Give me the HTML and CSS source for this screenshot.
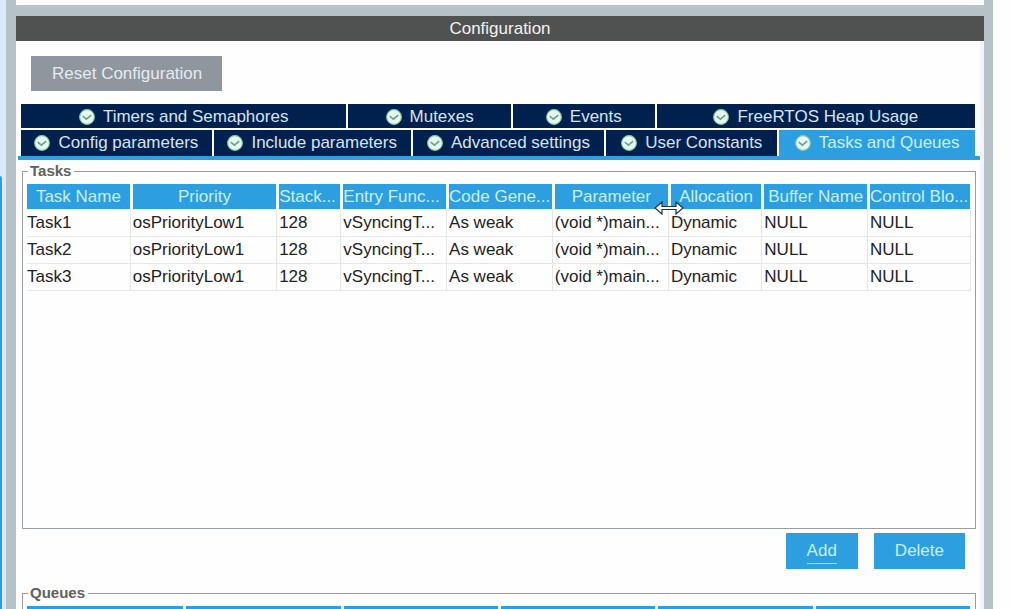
FILE: index.html
```
<!DOCTYPE html>
<html lang="en">
<head>
  <meta charset="UTF-8" />
  <meta name="viewport" content="width=device-width, initial-scale=1.0" />
  <title>Configuration</title>
  <link rel="stylesheet" href="styles.css">
</head>
<body>
  <svg class="defs" width="0" height="0" aria-hidden="true">
    <symbol id="check" viewBox="0 0 16 16">
      <circle cx="8" cy="8" r="7.4" fill="#e4faee" stroke="#86c5a6" stroke-width="1.1"/>
      <path d="M3.8 7.2 L7.4 10.2 L12.2 6.2" fill="none" stroke="#6f9f8e" stroke-width="1.7"/>
    </symbol>
  </svg>

  <div class="app">
    <div class="side"><div class="side-thumb"></div></div>
    <main class="pane">
      <div class="upper"></div>
      <h1>Configuration</h1>
      <div class="content">
        <button class="reset" type="button">Reset Configuration</button>

        <nav class="tabs">
          <div class="tab-row back">
            <button type="button" class="tab"><svg class="icon"><use href="#check"/></svg>Timers and Semaphores</button>
            <button type="button" class="tab"><svg class="icon"><use href="#check"/></svg>Mutexes</button>
            <button type="button" class="tab"><svg class="icon"><use href="#check"/></svg>Events</button>
            <button type="button" class="tab"><svg class="icon"><use href="#check"/></svg>FreeRTOS Heap Usage</button>
          </div>
          <div class="tab-row front">
            <button type="button" class="tab"><svg class="icon"><use href="#check"/></svg>Config parameters</button>
            <button type="button" class="tab"><svg class="icon"><use href="#check"/></svg>Include parameters</button>
            <button type="button" class="tab"><svg class="icon"><use href="#check"/></svg>Advanced settings</button>
            <button type="button" class="tab"><svg class="icon"><use href="#check"/></svg>User Constants</button>
            <button type="button" class="tab active"><svg class="icon"><use href="#check"/></svg>Tasks and Queues</button>
          </div>
        </nav>

        <fieldset class="group tasks">
          <legend>Tasks</legend>
          <table>
            <colgroup>
              <col class="c-name"><col class="c-priority"><col class="c-stack">
              <col class="c-entry"><col class="c-code"><col class="c-param">
              <col class="c-alloc"><col class="c-buffer"><col class="c-control">
            </colgroup>
            <thead>
              <tr>
                <th>Task Name</th>
                <th>Priority</th>
                <th class="cut">Stack...</th>
                <th class="cut">Entry Func...</th>
                <th class="cut">Code Gene...</th>
                <th class="resizing">Parameter
                  <svg class="cursor" viewBox="0 0 30 14"><path d="M1 7 L8 1 V5.5 H22 V1 L29 7 L22 13 V8.5 H8 V13 Z" fill="#fff" stroke="#234" stroke-width="1.2"/></svg>
                </th>
                <th>Allocation</th>
                <th>Buffer Name</th>
                <th class="cut">Control Blo...</th>
              </tr>
            </thead>
            <tbody>
              <tr><td>Task1</td><td>osPriorityLow1</td><td>128</td><td>vSyncingT...</td><td>As weak</td><td>(void *)main...</td><td>Dynamic</td><td>NULL</td><td>NULL</td></tr>
              <tr><td>Task2</td><td>osPriorityLow1</td><td>128</td><td>vSyncingT...</td><td>As weak</td><td>(void *)main...</td><td>Dynamic</td><td>NULL</td><td>NULL</td></tr>
              <tr><td>Task3</td><td>osPriorityLow1</td><td>128</td><td>vSyncingT...</td><td>As weak</td><td>(void *)main...</td><td>Dynamic</td><td>NULL</td><td>NULL</td></tr>
            </tbody>
          </table>
        </fieldset>

        <div class="actions">
          <button type="button"><span class="focused">Add</span></button>
          <button type="button">Delete</button>
        </div>

        <fieldset class="group queues">
          <legend>Queues</legend>
          <table>
            <thead>
              <tr><th></th><th></th><th></th><th></th><th></th><th></th></tr>
            </thead>
          </table>
        </fieldset>
      </div>
    </main>
  </div>
</body>
</html>
```

FILE: styles.css
```
* {
  box-sizing: border-box;
}
body {
  margin: 0;
  font-family: "Liberation Sans", Arial, sans-serif;
  font-size: 17px;
  background: #fefefe;
  color: #222;
}
button {
  font: inherit;
  border: none;
  cursor: pointer;
}
.defs {
  position: absolute;
}
.app {
  display: flex;
  height: 100vh;
  overflow: hidden;
  padding-right: 17px;
}

/* scrollbar of the neighbouring pane */
.side {
  width: 6px;
  padding-top: 176px;
  background: #dce9f8;
}
.side-thumb {
  width: 2px;
  height: 100%;
  background: #2d9fe0;
  border-radius: 0 2px 0 0;
}
.pane {
  flex: 1;
  min-width: 0;
  border-left: 10px solid #b7c1c8;
  border-right: 9px solid #b7c1c8;
}
.upper {
  height: 5px;
}
h1 {
  margin: 0;
  border-top: 11px solid #b7c1c8;
  background: #505251;
  color: #f2f2f2;
  font-size: 17px;
  font-weight: 400;
  line-height: 25px;
  text-align: center;
}
.content {
  padding: 15px 4px 0 2px;
  border-right: 4px solid #f0f5f9;
}
.reset {
  display: block;
  height: 35px;
  margin-left: 13px;
  padding: 1px 20px 0 21px;
  background: #8f969e;
  color: #e6eaf2;
}

/* tabs */
.tabs {
  margin-top: 13px;
  margin-right: -4px;
  padding: 0 5px 0 3px;
  border-bottom: 4px solid #2d9fe0;
}
.tab-row {
  display: grid;
  gap: 2px;
}
.back {
  grid-template-columns: 326fr 163fr 142fr 319fr;
  margin-bottom: 2px;
}
.front {
  grid-template-columns: 191fr 197fr 192fr 171fr 196fr;
}
.tab {
  display: flex;
  align-items: center;
  justify-content: center;
  gap: 8px;
  height: 24px;
  padding: 1px 0 0;
  background: #00204d;
  color: #d8e3f2;
  white-space: nowrap;
}
.front .tab {
  height: 26px;
  padding: 0;
}
.tab.active {
  background: #2d9fe0;
  color: #c8efff;
}
.icon {
  width: 16px;
  height: 16px;
  flex: none;
}

/* task and queue groups */
.group {
  margin: 3px 0 0 4px;
  padding: 5px 4px 0 4px;
  border: 1px solid #9a9da0;
  min-width: 0;
}
legend {
  margin-left: 1px;
  padding: 0 3px 0 2px;
  font-size: 15px;
  font-weight: 700;
  line-height: 16px;
  color: #606060;
}
.tasks {
  min-height: 366px;
}
table {
  width: 100%;
  table-layout: fixed;
  border-collapse: separate;
  border-spacing: 0;
}
.c-name { width: 11%; }
.c-priority { width: 15.5%; }
.c-stack { width: 6.8%; }
.c-entry { width: 11.2%; }
.c-code { width: 11.2%; }
.c-param { width: 12.3%; }
.c-alloc { width: 9.9%; }
.c-buffer { width: 11.2%; }
.c-control { width: 10.9%; }
th {
  height: 26px;
  padding: 0;
  background: #2d9fe0;
  background-clip: padding-box;
  border-left: 2px solid #effcff;
  border-right: 1px solid #effcff;
  border-bottom: 1px solid #effcff;
  color: #c8efff;
  font-weight: 400;
  line-height: 25px;
  white-space: nowrap;
}
th:first-child {
  border-left: none;
}
.cut {
  text-align: left;
}
.resizing {
  position: relative;
}
.cursor {
  position: absolute;
  right: -16px;
  top: 17px;
  z-index: 1;
  width: 30px;
  height: 14px;
}
td {
  height: 27px;
  padding: 0;
  border-right: 1px solid #e4e6e7;
  border-bottom: 1px solid #e4e6e7;
  line-height: 26px;
  white-space: nowrap;
}
td + td {
  padding-left: 2px;
}
.actions {
  display: flex;
  justify-content: flex-end;
  gap: 16px;
  padding: 4px 11px 0 0;
}
.actions button {
  height: 36px;
  padding: 0 21px;
  background: #2d9fe0;
  color: #c8efff;
}
.focused {
  display: inline-block;
  border-bottom: 1px solid #a8dcf5;
  line-height: 24px;
}
.queues {
  margin-top: 16px;
}
```
